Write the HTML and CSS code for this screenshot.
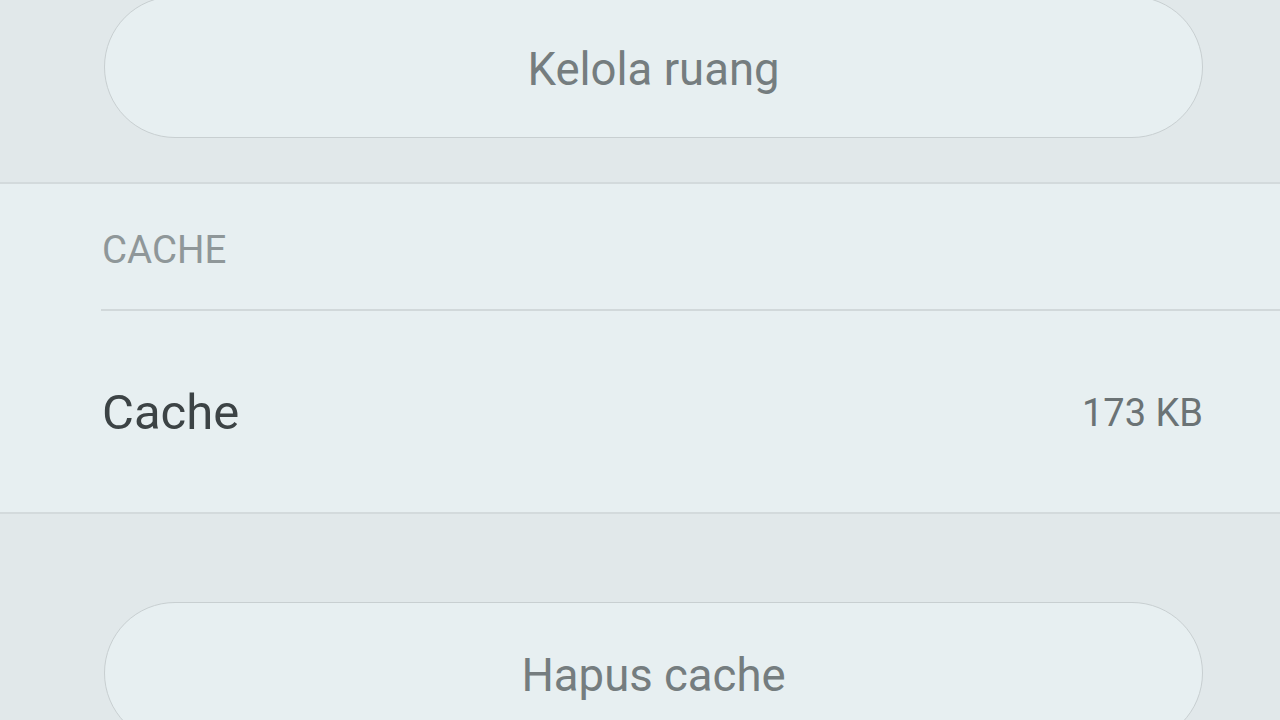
FILE: index.html
```html
<!DOCTYPE html>
<html lang="id">
<head>
  <meta charset="UTF-8">
  <meta name="viewport" content="width=device-width, initial-scale=1.0">
  <title>Penyimpanan</title>
  <link rel="stylesheet" href="styles.css">
</head>
<body>
  <div class="action top">
    <button class="pill">Kelola ruang</button>
  </div>

  <div class="section">
    <div class="section-title">CACHE</div>
    <div class="row">
      <span class="row-label">Cache</span>
      <span class="row-value">173 KB</span>
    </div>
  </div>

  <div class="action bottom">
    <button class="pill">Hapus cache</button>
  </div>
</body>
</html>
```

FILE: styles.css
```css
body {
  margin: 0;
  background: #e1e8ea;
  font-family: Roboto, "Noto Sans", sans-serif;
  height: 720px;
  overflow: hidden;
}
.action {
  padding: 0 77px 0 104px;
}
.action.top {
  margin-top: -4px;
  padding-bottom: 44px;
}
.action.bottom {
  padding-top: 88px;
}
.pill {
  display: block;
  width: 100%;
  height: 142px;
  padding: 4px 0 0;
  border: 1.5px solid #c8cfd1;
  border-radius: 71px;
  background: #e7eff1;
  color: #757d7f;
  font-family: inherit;
  font-size: 45.5px;
  cursor: pointer;
}
.section {
  background: #e7eff1;
  border-top: 2px solid #d3dadc;
  border-bottom: 2px solid #d3dadc;
}
.section-title {
  margin-left: 101px;
  padding: 5px 0 0 1px;
  height: 127px;
  display: flex;
  align-items: center;
  font-size: 38.5px;
  color: #8f9799;
  border-bottom: 2px solid #d1d8da;
  box-sizing: border-box;
}
.row {
  display: flex;
  justify-content: space-between;
  align-items: center;
  height: 201px;
  padding: 2px 77px 0 102px;
  box-sizing: border-box;
}
.row-label {
  font-size: 49px;
  color: #3c4345;
}
.row-value {
  font-size: 38px;
  color: #6b7375;
}
```
